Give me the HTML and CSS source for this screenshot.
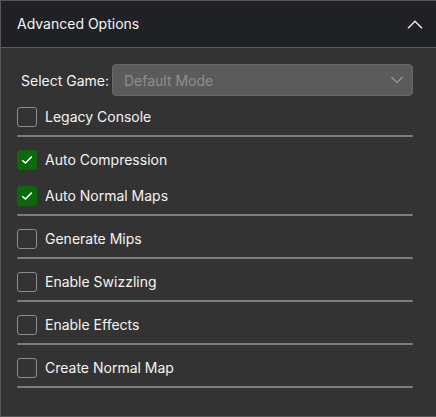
FILE: index.html
```
<!DOCTYPE html>
<html>
<head>
<meta charset="utf-8">
<link rel="stylesheet" href="styles.css">
</head>
<body>
<div class="panel">
  <div class="header">
    <span class="title">Advanced Options</span>
    <svg class="chev-up" width="16" height="9" viewBox="0 0 16 9"><path d="M1 8.2 L8 1.2 L15 8.2" fill="none" stroke="#e8e8e8" stroke-width="1.5"/></svg>
  </div>
  <div class="content">
    <div class="select-row">
      <span class="select-label">Select Game:</span>
      <div class="select">
        <span>Default Mode</span>
        <svg width="12" height="8" viewBox="0 0 12 8"><path d="M0.5 1 L6 6.5 L11.5 1" fill="none" stroke="#9a9a9a" stroke-width="1.2"/></svg>
      </div>
    </div>
    <div class="group">
      <div class="row"><span class="box"></span><span class="label">Legacy Console</span></div>
    </div>
    <div class="sep"></div>
    <div class="group">
      <div class="row"><span class="box checked"><svg width="12" height="10" viewBox="0 0 12 10"><path d="M1.2 5.2 L4.4 8 L10.8 1.6" fill="none" stroke="#fff" stroke-width="1.5"/></svg></span><span class="label">Auto Compression</span></div>
      <div class="row"><span class="box checked"><svg width="12" height="10" viewBox="0 0 12 10"><path d="M1.2 5.2 L4.4 8 L10.8 1.6" fill="none" stroke="#fff" stroke-width="1.5"/></svg></span><span class="label">Auto Normal Maps</span></div>
    </div>
    <div class="sep"></div>
    <div class="group">
      <div class="row"><span class="box"></span><span class="label">Generate Mips</span></div>
    </div>
    <div class="sep"></div>
    <div class="group">
      <div class="row"><span class="box"></span><span class="label">Enable Swizzling</span></div>
    </div>
    <div class="sep"></div>
    <div class="group">
      <div class="row"><span class="box"></span><span class="label">Enable Effects</span></div>
    </div>
    <div class="sep"></div>
    <div class="group">
      <div class="row"><span class="box"></span><span class="label">Create Normal Map</span></div>
    </div>
    <div class="sep"></div>
  </div>
</div>
</body>
</html>
```
FILE: styles.css
```
html, body {
  margin: 0;
  padding: 0;
  background: #333333;
}
body {
  font-family: Inter, "Noto Sans", sans-serif;
  font-size: 14px;
  color: #f4f4f4;
}
.panel {
  box-sizing: border-box;
  width: 437px;
  height: 417px;
  border: 1px solid #565656;
  background: #333333;
  overflow: hidden;
}
.header {
  height: 46px;
  background: #202124;
  border-bottom: 1px solid #5a5a5a;
  display: flex;
  align-items: center;
  justify-content: space-between;
  padding: 0 13px 0 16px;
}
.title {
  font-size: 14px;
  color: #f6f6f6;
  padding-bottom: 1px;
}
.content {
  padding: 16px 23px 0 16px;
  display: flex;
  flex-direction: column;
}
.select-row {
  display: flex;
  align-items: center;
  padding-left: 4px;
  gap: 3px;
  height: 32px;
}
.select-label {
  color: #f4f4f4;
  white-space: nowrap;
  flex: 0 0 auto;
}
.select {
  box-sizing: border-box;
  flex: 1;
  height: 32px;
  background: #5b5b5b;
  border: 1px solid #686868;
  border-radius: 4px;
  display: flex;
  align-items: center;
  justify-content: space-between;
  padding: 0 9px 0 11px;
  color: #8e8e8e;
}
.group {
  display: flex;
  flex-direction: column;
  gap: 16px;
  padding: 13px 0 8px 0;
}
.select-row + .group {
  padding-top: 11px;
}
.row {
  display: flex;
  align-items: center;
  gap: 8px;
  height: 20px;
}
.box {
  box-sizing: border-box;
  width: 20px;
  height: 20px;
  border: 1px solid #8c8c8c;
  border-radius: 3px;
  display: flex;
  align-items: center;
  justify-content: center;
}
.box.checked {
  background: #0a690a;
  border-color: #0a690a;
}
.label {
  color: #f4f4f4;
  padding-bottom: 1px;
}
.sep {
  height: 2px;
  background: #7d7d7d;
  border-radius: 1px;
}
```
